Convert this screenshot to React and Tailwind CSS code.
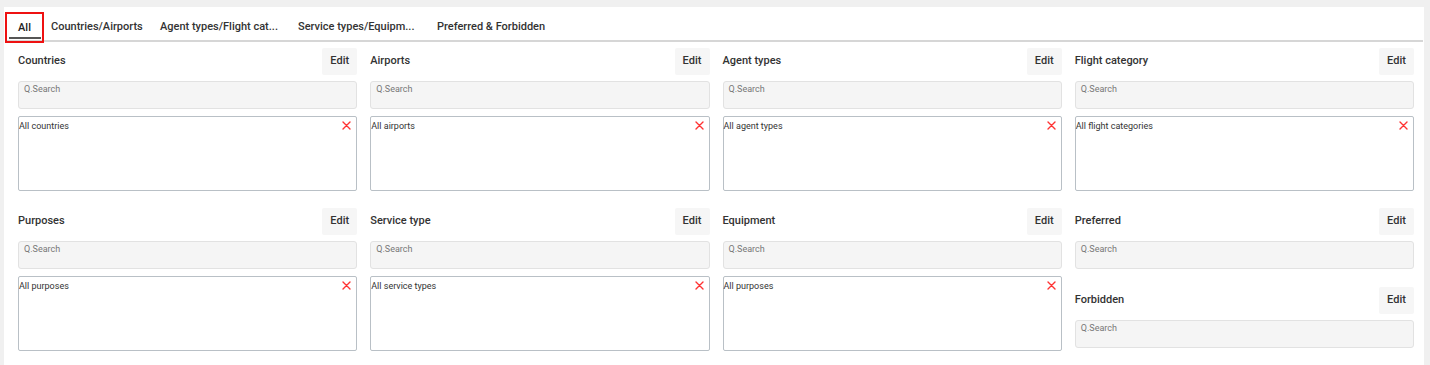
const font = { fontFamily: 'Roboto, "Liberation Sans", sans-serif' };

const tabs = [
  { label: 'Countries/Airports', w: 'w-[109px]' },
  { label: 'Agent types/Flight cat...', w: 'w-[138px]' },
  { label: 'Service types/Equipm...', w: 'w-[139px]' },
  { label: 'Preferred & Forbidden', w: 'w-[130px]' },
];

function Header({ title }) {
  return (
    <div className="flex items-center justify-between h-[27px]">
      <span className="text-[11px] font-medium text-[#333]">{title}</span>
      <button className="h-[27px] w-[35px] bg-[#f6f6f6] text-[11px] text-[#333] font-medium rounded-[2px]">
        Edit
      </button>
    </div>
  );
}

function SearchBox() {
  return (
    <div className="mt-[6px] h-[28px] bg-[#f5f5f5] border border-[#e2e2e2] rounded-[3px] px-[5px] pt-[1px] text-[9px] leading-[12px] text-[#777]">
      Q.Search
    </div>
  );
}

function XIcon() {
  return (
    <svg width="9" height="9" viewBox="0 0 9 9" className="mt-[1px]">
      <path d="M1 1L8 8M8 1L1 8" stroke="#ff3333" strokeWidth="1.4" strokeLinecap="round" />
    </svg>
  );
}

function Section({ title, value }) {
  return (
    <div>
      <Header title={title} />
      <SearchBox />
      <div className="mt-[7px] h-[75px] border border-[#b9c0c6] rounded-[2px] flex justify-between items-start pl-0 pr-[5px] pt-[3px]">
        <span className="text-[9px] leading-[12px] text-[#333]">{value}</span>
        <XIcon />
      </div>
    </div>
  );
}

export default function App() {
  return (
    <div className="bg-[#f0f0f0] h-[365px] pt-[7px] pl-[4px] pr-[6px]" style={font}>
      <div className="bg-white h-full">
        <div className="mx-[1px] flex items-start border-b-2 border-[#d6d6d6] h-[35px]">
          <div className="relative z-10 mt-[5px] h-[31px] w-[39px] border-2 border-[#ee1111] flex flex-col items-center justify-end pb-[2px]">
            <span className="w-[32px] text-center border-b-2 border-[#555] pb-[3px] text-[11px] leading-[13px] font-medium text-[#222]">
              All
            </span>
          </div>
          <div className="w-[7px]" />
          {tabs.map((t) => (
            <div
              key={t.label}
              className={`${t.w} mt-[5px] h-[31px] flex items-center text-[11px] font-medium text-[#333] whitespace-nowrap`}
            >
              {t.label}
            </div>
          ))}
        </div>
        <div className="grid grid-cols-4 gap-x-[13px] gap-y-[17px] pl-[14px] pr-[10px] pt-[6px]">
          <Section title="Countries" value="All countries" />
          <Section title="Airports" value="All airports" />
          <Section title="Agent types" value="All agent types" />
          <Section title="Flight category" value="All flight categories" />
          <Section title="Purposes" value="All purposes" />
          <Section title="Service type" value="All service types" />
          <Section title="Equipment" value="All purposes" />
          <div>
            <Header title="Preferred" />
            <SearchBox />
            <div className="mt-[18px]">
              <Header title="Forbidden" />
              <SearchBox />
            </div>
          </div>
        </div>
      </div>
    </div>
  );
}
